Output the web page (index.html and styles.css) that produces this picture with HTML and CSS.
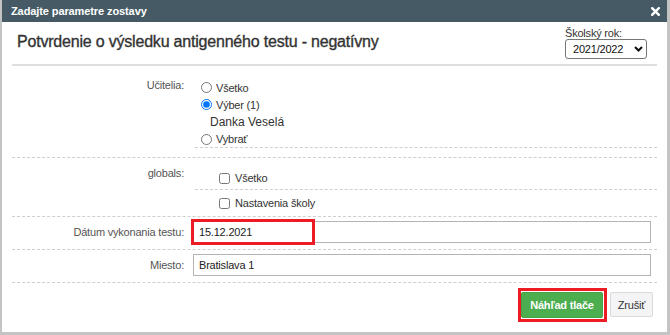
FILE: index.html
```html
<!DOCTYPE html>
<html>
<head>
    <meta charset="UTF-8">
    <title>Zadajte parametre zostavy</title>
    <link rel="stylesheet" href="styles.css">
</head>
<body>
  <div class="dialog">
    <div class="titlebar">
      <span>Zadajte parametre zostavy</span>
      <svg class="close" width="9" height="9" viewBox="0 0 9 9">
        <path d="M1.2 1.2 L7.8 7.8 M7.8 1.2 L1.2 7.8" stroke="#fff" stroke-width="2.4" stroke-linecap="square"/>
      </svg>
    </div>
    <div class="content">
      <div class="header">
        <h1>Potvrdenie o výsledku antigenného testu - negatívny</h1>
        <div class="year">
          <div class="year-label">Školský rok:</div>
          <div class="select">
            <span>2021/2022</span>
            <svg width="9" height="6" viewBox="0 0 9 6">
              <path d="M1 1 L4.5 4.5 L8 1" fill="none" stroke="#111" stroke-width="2"/>
            </svg>
          </div>
        </div>
      </div>

      <div class="row">
        <div class="label label-teachers">Učitelia:</div>
        <div class="value">
          <div class="options">
            <label class="opt opt-1"><input type="radio" name="ucitelia">Všetko</label>
            <label class="opt opt-2"><input type="radio" name="ucitelia" checked>Výber (1)</label>
            <div class="picked">Danka Veselá</div>
            <label class="opt opt-4"><input type="radio" name="ucitelia">Vybrať</label>
          </div>
        </div>
      </div>

      <div class="row">
        <div class="label label-globals">globals:</div>
        <div class="value">
          <label class="check check-first"><input type="checkbox">Všetko</label>
          <label class="check check-last"><input type="checkbox">Nastavenia školy</label>
        </div>
      </div>

      <div class="row row-input">
        <div class="label">Dátum vykonania testu:</div>
        <div class="value field">
          <input class="text" type="text" value="15.12.2021">
          <span class="mark mark-date"></span>
        </div>
      </div>

      <div class="row row-input">
        <div class="label">Miesto:</div>
        <div class="value field">
          <input class="text" type="text" value="Bratislava 1">
        </div>
      </div>

      <div class="footer">
        <span class="field">
          <button class="btn btn-primary">Náhľad tlače</button>
          <span class="mark mark-btn"></span>
        </span>
        <button class="btn btn-cancel">Zrušiť</button>
      </div>
    </div>
  </div>
</body>
</html>
```

FILE: styles.css
```css
html, body {
    margin: 0;
}
body {
    font-family: "Liberation Sans", Arial, sans-serif;
    font-size: 11px;
    letter-spacing: -0.2px;
    color: #333;
}
.dialog {
    box-sizing: border-box;
    width: 670px;
    height: 335px;
    border: solid #c4c4c4;
    border-width: 0 3px 3px 2px;
    background: #fff;
    display: flex;
    flex-direction: column;
}
.titlebar {
    height: 22px;
    flex-shrink: 0;
    background: #455a64;
    color: #fff;
    font-weight: bold;
    letter-spacing: -0.1px;
    display: flex;
    align-items: center;
    justify-content: space-between;
    padding: 0 7px 0 9px;
}
.close {
    display: block;
}
.content {
    flex: 1;
    padding: 0 10px;
    display: flex;
    flex-direction: column;
}
.header {
    display: flex;
    align-items: center;
    justify-content: space-between;
    padding: 5px 10px 5px 5px;
    border-bottom: 2px solid #dedede;
}
.header h1 {
    margin: 0 0 2px;
    font-size: 16px;
    font-weight: normal;
    line-height: 20px;
    color: #333;
    -webkit-text-stroke: 0.35px #333;
}
.year-label {
    line-height: 12px;
}
.select {
    box-sizing: border-box;
    width: 82px;
    height: 20px;
    border: 1px solid #767676;
    border-radius: 3px;
    display: flex;
    align-items: center;
    justify-content: space-between;
    padding: 0 3px 0 7px;
    color: #111;
}
.select svg {
    display: block;
}

.row {
    display: flex;
    border-bottom: 1px dashed #cfcfcf;
}
.label {
    width: 172px;
    flex-shrink: 0;
    margin-right: 9px;
    text-align: right;
    line-height: 14px;
    color: #555;
}
.value {
    flex: 1;
}
.label-teachers {
    padding-top: 12px;
}
.label-globals {
    padding-top: 8px;
}

.options {
    margin: 0 0 9px 2px;
    padding-top: 13px;
    border-bottom: 1px dashed #cfcfcf;
}
.opt {
    display: flex;
    align-items: center;
    height: 17px;
    padding-left: 6px;
}
.opt-4 {
    height: 16px;
}
.opt input {
    margin: 0 4px 0 0;
    width: 11px;
    height: 11px;
}
.picked {
    height: 18px;
    line-height: 18px;
    padding-left: 15px;
    font-size: 12px;
    letter-spacing: 0;
}

.check {
    display: flex;
    align-items: center;
    height: 14px;
    margin-left: 2px;
    padding-left: 24px;
}
.check input {
    margin: 0 5px 0 0;
    width: 11px;
    height: 11px;
}
.check-first {
    padding-top: 13px;
    padding-bottom: 4px;
    border-bottom: 1px dashed #cfcfcf;
}
.check-last {
    padding-top: 6px;
    padding-bottom: 6px;
}

.row-input {
    align-items: center;
    padding: 4px 0 6px;
}
.field {
    position: relative;
}
.text {
    box-sizing: border-box;
    display: block;
    width: 458px;
    height: 22px;
    margin: 0;
    padding: 0 5px;
    border: 1px solid #b3b3b3;
    font-family: "Liberation Sans", Arial, sans-serif;
    font-size: 11px;
    letter-spacing: -0.2px;
    color: #222;
    outline: none;
}

.footer {
    display: flex;
    justify-content: flex-end;
    align-items: flex-start;
    gap: 7px;
    padding: 9px 4px 0 0;
}
.btn {
    box-sizing: border-box;
    margin: 0;
    padding: 0;
    border-radius: 2px;
    font-family: "Liberation Sans", Arial, sans-serif;
    font-size: 11px;
    letter-spacing: -0.2px;
}
.btn-primary {
    display: block;
    width: 82px;
    height: 26px;
    background: #4cae4f;
    border: 1px solid #45a248;
    color: #fff;
    font-weight: bold;
}
.btn-cancel {
    width: 43px;
    height: 25px;
    background: #f4f4f6;
    border: 1px solid #dadada;
    color: #333;
}

.mark {
    position: absolute;
    box-sizing: border-box;
    border: 3px solid #ed1c24;
    pointer-events: none;
}
.mark-date {
    left: -2px;
    top: -2px;
    width: 124px;
    height: 26px;
}
.mark-btn {
    left: -3px;
    top: -4px;
    right: -4px;
    bottom: -4px;
}
```
